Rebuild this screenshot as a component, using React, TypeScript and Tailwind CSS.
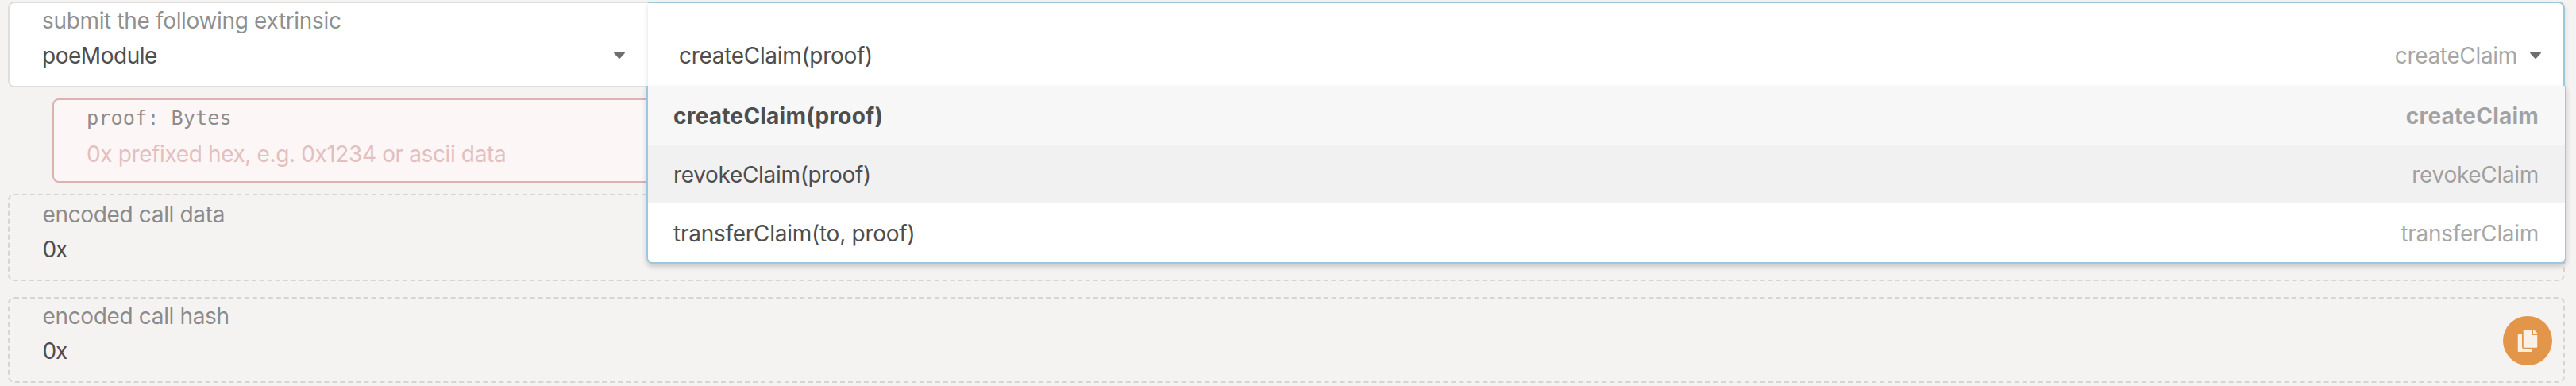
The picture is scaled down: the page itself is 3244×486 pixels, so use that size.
import type { ReactNode } from "react";
import { FaCopy } from "react-icons/fa";

type Method = {
  signature: string;
  name: string;
  row: string;
  signatureStyle: string;
  nameStyle: string;
};

const methods: Method[] = [
  {
    signature: "createClaim(proof)",
    name: "createClaim",
    row: "bg-[#f7f7f7] font-bold",
    signatureStyle: "tracking-[0.22px]",
    nameStyle: "tracking-[0.22px]",
  },
  {
    signature: "revokeClaim(proof)",
    name: "revokeClaim",
    row: "bg-[#f1f1f1]",
    signatureStyle: "tracking-[-0.32px]",
    nameStyle: "tracking-[-0.32px]",
  },
  {
    signature: "transferClaim(to, proof)",
    name: "transferClaim",
    row: "bg-white",
    signatureStyle: "tracking-[-0.26px]",
    nameStyle: "tracking-[-0.3px]",
  },
];

function Caret() {
  return (
    <svg className="h-2 w-3.5 shrink-0 fill-[#6f6f6f]" viewBox="0 0 14 8">
      <path d="M0.6 0H13.4Q14.3 0.5 13.6 1.2L7.9 7.5Q7 8.4 6.1 7.5L0.4 1.2Q-0.3 0.5 0.6 0Z" />
    </svg>
  );
}

function OutputField({ label, className, children }: { label: string; className: string; children?: ReactNode }) {
  return (
    <div className={`flex justify-between rounded-lg border-2 border-dashed border-[#d5d5d4] pl-[41.5px] ${className}`}>
      <div>
        <div className="tracking-[-0.35px] text-[#4e4e4e]/65">{label}</div>
        <div className="mt-1 tracking-[-1.2px]">0x</div>
      </div>
      {children}
    </div>
  );
}

function MethodMenu() {
  return (
    <div className="absolute -left-0.5 -right-0.5 top-[106px] z-10 overflow-hidden rounded-b-lg border-2 border-t-0 border-[#9ec7d9] bg-white shadow-[0_4px_6px_rgba(34,36,38,0.2)]">
      {methods.map((m) => (
        <div key={m.name} className={`flex h-[74px] justify-between pl-8 pr-[33px] pt-[18px] ${m.row}`}>
          <span className={m.signatureStyle}>{m.signature}</span>
          <span className={`text-[#4e4e4e]/50 ${m.nameStyle}`}>{m.name}</span>
        </div>
      ))}
    </div>
  );
}

export default function App() {
  return (
    <div className="h-[486px] w-full overflow-hidden bg-[#f4f3f1] pl-2.5 pr-3.5 pt-0.5 font-['Inter','Liberation_Sans',sans-serif] text-[28px] leading-10 text-[#4e4e4e]">
      <div className="flex h-[108px]">
        <div className="flex w-[806px] justify-between rounded-l-lg border-2 border-r-0 border-[#dededf] bg-white pl-[41px] pr-[29px] pt-0.5">
          <div>
            <div className="tracking-[-0.34px] text-[#4e4e4e]/65">submit the following extrinsic</div>
            <div className="mt-1 tracking-[-0.47px]">poeModule</div>
          </div>
          <div className="pt-[60px]">
            <Caret />
          </div>
        </div>
        <div className="relative h-[106px] min-w-0 flex-1 rounded-tr-lg bg-white shadow-[0_4px_6px_rgba(34,36,38,0.15)]">
          <div className="flex h-full justify-between rounded-tr-lg border-r-2 border-t-2 border-[#9ec7d9] pl-[39px] pr-7 pt-[46px]">
            <span className="tracking-[-0.31px]">createClaim(proof)</span>
            <div className="flex gap-4">
              <span className="tracking-[-0.33px] text-[#4e4e4e]/50">createClaim</span>
              <div className="pt-4">
                <Caret />
              </div>
            </div>
          </div>
          <MethodMenu />
        </div>
      </div>

      <div className="ml-14 mt-3.5 h-[106px] rounded-lg border-2 border-[#dbb1b2] bg-[#fcf6f6] pl-[41px] pt-[3px]">
        <div className="font-['DejaVu_Sans_Mono',monospace] text-[25.3px] text-[#4e4e4e]/65">proof: Bytes</div>
        <div className="mt-[5px] tracking-[-0.38px] text-[#e3bfbe]">0x prefixed hex, e.g. 0x1234 or ascii data</div>
      </div>

      <OutputField label="encoded call data" className="mt-3.5 h-[110px] pt-1" />
      <OutputField label="encoded call hash" className="mt-5 h-[108px] pr-[14px] pt-0.5">
        <button
          type="button"
          aria-label="copy"
          className="mt-5 flex size-[62px] items-center justify-center rounded-full bg-[#e3954a] text-[28px] text-[#fbf0e6]"
        >
          <FaCopy />
        </button>
      </OutputField>
    </div>
  );
}
